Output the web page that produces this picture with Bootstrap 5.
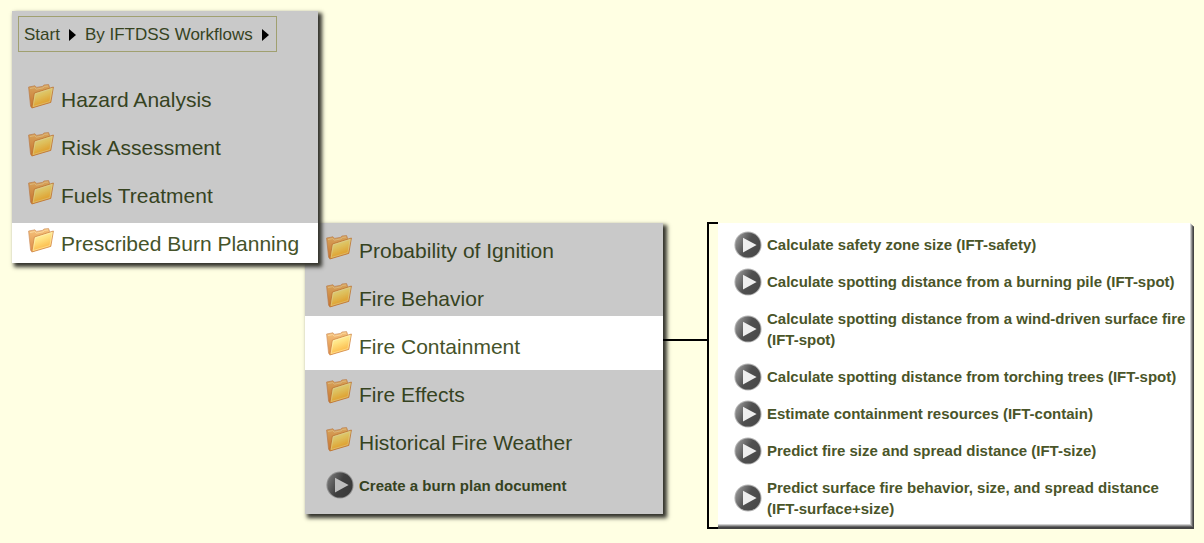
<!DOCTYPE html>
<html lang="en">
<head>
<meta charset="utf-8">
<meta name="viewport" content="width=device-width, initial-scale=1">
<title>IFTDSS Workflows</title>
<link rel="stylesheet" href="https://cdn.jsdelivr.net/npm/bootstrap@5.3.0/dist/css/bootstrap.min.css">
<style>
  body { background: #ffffe3; color: #36431f; font-family: "Liberation Sans", Arial, sans-serif; }
  a { color: inherit; text-decoration: none; }
  .workflow { padding: 11px 10px 12px 12px; }
  .panel { background: #c9c9c9; box-shadow: 3px 3px 4px 1px #33332c; }
  .panel-start { flex: 1 1 306px; z-index: 1; padding-top: 5px; }
  .panel-sub { flex: 1 1 358px; margin: 212px 0 0 -13px; padding: 2px 0 9px; }
  .trail { margin: 0 0 27px 6px; border: 1px solid #a0a070; height: 36px; padding: 1px 7px 0 5px; font-size: 17px; line-height: 24px; }
  .trail svg { width: 7px; height: 12px; margin: 0 9px; }
  .trail svg:last-child { margin-right: 0; }
  .entry { display: flex; align-items: center; gap: 7px; font-size: 21px; line-height: 24px; white-space: nowrap; }
  .entry .folder { width: 26px; height: 25px; margin-bottom: 7px; flex: none; filter: brightness(.85) saturate(1.2); }
  .panel-start .entry { height: 40px; padding: 1px 0 0 16px; }
  .panel-sub .entry { height: 48px; padding: 4px 0 0 21px; }
  .entry.current { background: #fff; color: #45532a; }
  .entry.current .folder { filter: none; }
  .panel-sub .entry.current { height: 54px; margin: -5px 0 -1px; padding: 8px 0 0 21px; }
  .play { width: 28px; height: 28px; flex: none; }
  .panel-sub .entry.task { height: 40px; padding-top: 0; gap: 5px; }
  .entry .play { filter: brightness(.8); }
  .task { font-size: 15px; font-weight: bold; line-height: 21px; }
  .joint { flex: 1 1 44px; margin-top: 328px; border-top: 2px solid #000; }
  .bracket { width: 11px; margin-top: 211px; border: 2px solid #000; border-right: 0; flex: none; }
  .panel-tasks { flex: 1 1 476px; margin-top: 212px; padding: 3px 5px 2px 16px; background: #fff; color: #4a5529;
    clip-path: polygon(0 0, calc(100% - 4px) 0, 100% 4px, 100% 100%, 0 100%);
    box-shadow: inset -1px -2px 0 #444, inset -2px -3px 0 #666, inset -3px -4px 0 #999, inset -4px -5px 0 #d0d0d0; }
  .panel-tasks .task { display: flex; align-items: center; gap: 5px; padding: 8px 0; }
  .panel-tasks .play { margin: -4px 0; }
</style>
</head>
<body>
<svg width="0" height="0" class="position-absolute" aria-hidden="true">
  <defs>
    <linearGradient id="front" x1=".2" y1="0" x2=".6" y2="1"><stop offset="0" stop-color="#fff6b4"/><stop offset=".4" stop-color="#ffe484"/><stop offset="1" stop-color="#fbac36"/></linearGradient>
    <linearGradient id="back" x1="0" y1="0" x2="0" y2="1"><stop offset="0" stop-color="#f6c47c"/><stop offset="1" stop-color="#dc8a48"/></linearGradient>
    <linearGradient id="disc" x1="0" y1=".2" x2="1" y2=".7"><stop offset="0" stop-color="#999"/><stop offset=".5" stop-color="#505050"/><stop offset="1" stop-color="#484848"/></linearGradient>
    <symbol id="i-folder" viewBox="0 0 26 25">
      <path d="M.6 3 7 1.8 8.6 3.4 14.4 2.4 16 1 20.6 .6 21.6 3.4 20 18 4 23.6 2.6 22.4Z" fill="url(#back)" stroke="#cf9365" stroke-width=".7" stroke-linejoin="round"/>
      <path d="M2 4.6 6.6 3.6 8.2 5.2 15 3.8 16.6 2.4 20 2" fill="none" stroke="#fbdca6" stroke-width=".8"/>
      <path d="M6.4 9 25.4 3 22.8 18.4 3.8 24Z" fill="url(#front)" stroke="#d0884a" stroke-width=".8" stroke-linejoin="round"/>
      <path d="M7.3 9.8 24.2 4.5 21.9 17.6 5.2 22.5Z" fill="none" stroke="#fff4c4" stroke-width=".6" opacity=".8"/>
    </symbol>
    <symbol id="i-play" viewBox="0 0 28 28">
      <circle cx="14" cy="14" r="13.6" fill="#b5b5b5"/><circle cx="14" cy="14" r="12.6" fill="url(#disc)"/>
      <path d="M9 6.8V21.4L22.6 14Z" fill="#eee"/>
    </symbol>
    <symbol id="i-next" viewBox="0 0 7 12"><path d="M0 0 7 6 0 12Z" fill="#000"/></symbol>
  </defs>
</svg>
<main class="workflow d-flex align-items-start">
  <section class="panel panel-start position-relative">
    <nav class="trail d-inline-flex align-items-center" aria-label="Location">
      <a href="#">Start</a><svg><use href="#i-next"/></svg><a href="#">By IFTDSS Workflows</a><svg><use href="#i-next"/></svg>
    </nav>
    <nav class="d-flex flex-column gap-2" aria-label="Workflows">
      <a class="entry" href="#"><svg class="folder"><use href="#i-folder"/></svg>Hazard Analysis</a>
      <a class="entry" href="#"><svg class="folder"><use href="#i-folder"/></svg>Risk Assessment</a>
      <a class="entry" href="#"><svg class="folder"><use href="#i-folder"/></svg>Fuels Treatment</a>
      <a class="entry current" href="#"><svg class="folder"><use href="#i-folder"/></svg>Prescribed Burn Planning</a>
    </nav>
  </section>
  <nav class="panel panel-sub" aria-label="Prescribed Burn Planning">
    <a class="entry" href="#"><svg class="folder"><use href="#i-folder"/></svg>Probability of Ignition</a>
    <a class="entry" href="#"><svg class="folder"><use href="#i-folder"/></svg>Fire Behavior</a>
    <a class="entry current" href="#"><svg class="folder"><use href="#i-folder"/></svg>Fire Containment</a>
    <a class="entry" href="#"><svg class="folder"><use href="#i-folder"/></svg>Fire Effects</a>
    <a class="entry" href="#"><svg class="folder"><use href="#i-folder"/></svg>Historical Fire Weather</a>
    <a class="entry task" href="#"><svg class="play"><use href="#i-play"/></svg>Create a burn plan document</a>
  </nav>
  <div class="joint"></div>
  <div class="bracket align-self-stretch"></div>
  <nav class="panel-tasks" aria-label="Fire Containment">
    <a class="task" href="#"><svg class="play"><use href="#i-play"/></svg><span>Calculate safety zone size <span class="text-nowrap">(IFT-safety)</span></span></a>
    <a class="task" href="#"><svg class="play"><use href="#i-play"/></svg><span>Calculate spotting distance from a burning pile <span class="text-nowrap">(IFT-spot)</span></span></a>
    <a class="task" href="#"><svg class="play"><use href="#i-play"/></svg><span>Calculate spotting distance from a wind-driven surface fire <span class="text-nowrap">(IFT-spot)</span></span></a>
    <a class="task" href="#"><svg class="play"><use href="#i-play"/></svg><span>Calculate spotting distance from torching trees <span class="text-nowrap">(IFT-spot)</span></span></a>
    <a class="task" href="#"><svg class="play"><use href="#i-play"/></svg><span>Estimate containment resources <span class="text-nowrap">(IFT-contain)</span></span></a>
    <a class="task" href="#"><svg class="play"><use href="#i-play"/></svg><span>Predict fire size and spread distance <span class="text-nowrap">(IFT-size)</span></span></a>
    <a class="task" href="#"><svg class="play"><use href="#i-play"/></svg><span>Predict surface fire behavior, size, and spread distance <span class="text-nowrap">(IFT-surface+size)</span></span></a>
  </nav>
</main>
<script src="https://cdn.jsdelivr.net/npm/bootstrap@5.3.0/dist/js/bootstrap.bundle.min.js"></script>
</body>
</html>
